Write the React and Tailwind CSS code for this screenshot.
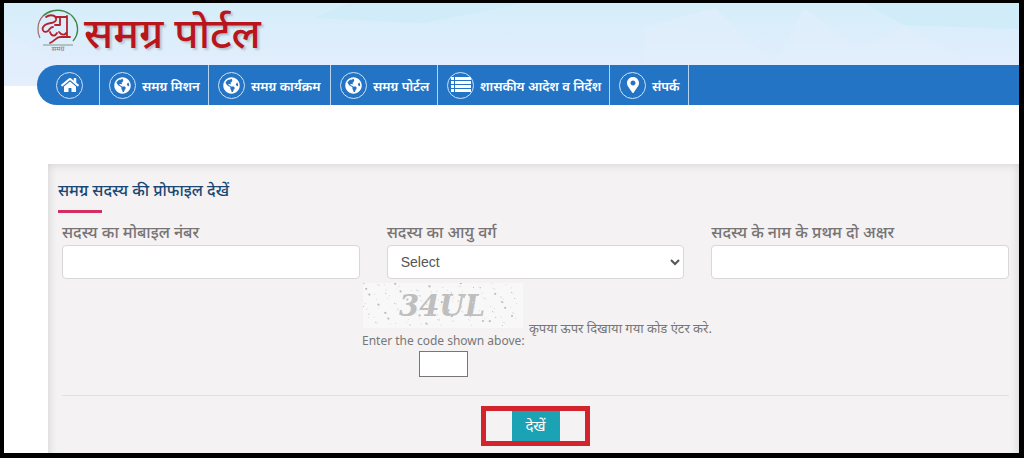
import React from "react";
import { FaHome, FaGlobeAmericas, FaMapMarkerAlt } from "react-icons/fa";

const navItems = [
  { label: "समग्र मिशन", icon: "globe", width: "w-[109px]" },
  { label: "समग्र कार्यक्रम", icon: "globe", width: "w-[122px]" },
  { label: "समग्र पोर्टल", icon: "globe", width: "w-[107px]" },
  { label: "शासकीय आदेश व निर्देश", icon: "list", width: "w-[172px]" },
  { label: "संपर्क", icon: "pin", width: "w-[79px]" },
];

function ListIcon() {
  return (
    <svg viewBox="0 0 22 18" className="h-[18px] w-[22px]" fill="currentColor" aria-hidden="true">
      {[1, 5, 9, 13].map((y) => (
        <g key={y}>
          <rect x="1" y={y} width="3" height="3" />
          <rect x="5" y={y} width="16" height="3" />
        </g>
      ))}
    </svg>
  );
}

const icons = {
  home: <FaHome className="size-[18px]" />,
  globe: <FaGlobeAmericas className="size-[17px]" />,
  list: <ListIcon />,
  pin: <FaMapMarkerAlt className="size-4" />,
};

function IconRing({ name }) {
  return (
    <span className="flex size-[27px] shrink-0 items-center justify-center rounded-full border border-[#cfe2f5] text-white">
      {icons[name]}
    </span>
  );
}

function Logo() {
  return (
    <svg viewBox="0 0 44 46" className="h-[46px] w-[44px] shrink-0" aria-hidden="true">
      <path d="M4 30A20 18.5 0 0 1 2 20A20 18.5 0 0 1 7 8" fill="none" stroke="#a2686a" strokeWidth="1.2" />
      <path d="M7 8A20 18.5 0 0 1 41.5 20A20 18.5 0 0 1 37 33" fill="none" stroke="#3f8746" strokeWidth="1.4" />
      <path d="M7 37H37" stroke="#7f9a84" strokeWidth="1" />
      <g fill="none" stroke="#b8202c" strokeWidth="1.8" strokeLinecap="round" strokeLinejoin="round">
        <path d="M10 9C14 6 21 7 20 12C19 16 13 14 9 17C4 21 8 26 12 23C14 21 14 19 17 19" />
        <path d="M14 24C15 28 19 29 21 25" />
        <path d="M20 9H26M24 9V17H19M31 8V29M27 9H31M31 24C29 28 25 27 23 24" />
        <path d="M14 35C19 33 20 29 24 29H34" />
      </g>
      <text x="22" y="43" textAnchor="middle" fontSize="7" fill="#9a6a80" fontFamily="Noto Sans Devanagari, Noto Sans, sans-serif">समग्र</text>
    </svg>
  );
}

function Backdrop() {
  return (
    <svg viewBox="0 0 1015 83" preserveAspectRatio="none" className="absolute inset-0 size-full" aria-hidden="true">
      <defs>
        <linearGradient id="sky" x1="0" y1="0" x2="0" y2="1">
          <stop offset="0" stopColor="#d5eefa" />
          <stop offset="1" stopColor="#e6edfd" />
        </linearGradient>
      </defs>
      <rect width="1015" height="83" fill="url(#sky)" />
      <path d="M0 30L60 62V83H0ZM711 5L770 62H640V24ZM800 5L855 45L900 22L960 58V62H770Z" fill="#e3effc" opacity=".6" />
      <path d="M310 15L345 0H520L420 20ZM860 0H1015V26L900 22Z" fill="#c9ebf6" opacity=".6" />
    </svg>
  );
}

function Field({ id, label, children }) {
  return (
    <div className="flex min-w-0 flex-col">
      <label htmlFor={id} className="h-6 pt-[2px] text-[16px] leading-6 font-medium whitespace-nowrap text-[#787474]">{label}</label>
      {children}
    </div>
  );
}

const specks = Array.from({ length: 150 }, (_, i) => ({
  x: (i * 61.7 + (i % 7) * 13) % 158,
  y: (i * 29.3 + (i % 5) * 7) % 43,
  r: i % 6 === 0 ? 1.1 : 0.6,
}));

function Captcha() {
  return (
    <svg viewBox="0 0 160 45" className="h-[45px] w-[160px]" role="img" aria-label="34UL">
      <rect width="160" height="45" fill="#f8f8f8" />
      <text x="36" y="33" fontFamily="DejaVu Serif, serif" fontStyle="italic" fontWeight="bold" fontSize="29" fill="#bebebe">34UL</text>
      {specks.map((s, i) => (
        <circle key={i} cx={s.x} cy={s.y} r={s.r} fill={i % 3 ? "#dcdcdc" : "#bdbdbd"} />
      ))}
    </svg>
  );
}

export default function App() {
  const box = "h-[34px] w-full rounded border border-[#d9d7d8] bg-white text-[14px] text-[#555]";
  return (
    <div className="h-screen overflow-hidden border-t-[3px] border-r-[5px] border-b-[5px] border-l-4 border-black bg-white font-['Noto_Sans_Devanagari','Noto_Sans',sans-serif]">
      <header className="relative h-[83px]">
        <Backdrop />
        <div className="relative flex h-[62px] items-start gap-1 pt-[5px] pl-8">
          <Logo />
          <h1 className="text-[42px] leading-[60px] font-medium whitespace-nowrap text-[#b8161c] [text-shadow:2px_2px_2px_#8886]">समग्र पोर्टल</h1>
        </div>
        <nav className="relative ml-[33px] flex h-10 rounded-l-[20px] bg-[#2474c6]">
          <a href="#home" aria-label="Home" className="flex w-[63px] items-center border-r border-[#b8d3ee] pl-[19px]">
            <IconRing name="home" />
          </a>
          {navItems.map((n) => (
            <a key={n.label} href="#menu" className={`flex items-center gap-[6px] border-r border-[#b8d3ee] pl-[9px] text-[13px] font-semibold whitespace-nowrap text-white ${n.width}`}>
              <IconRing name={n.icon} />
              <span className="pt-[6px]">{n.label}</span>
            </a>
          ))}
        </nav>
      </header>

      <main className="mt-[78px] ml-11 bg-[#f4f2f3] px-[10px] pt-4 pb-8 shadow-[inset_0_0_10px_#cfcdce]">
        <h2 className="h-[22px] pt-[2px] text-[16px] leading-[22px] font-medium whitespace-nowrap text-[#1b4873]">समग्र सदस्य की प्रोफाइल देखें</h2>
        <div className="mt-2 h-[3px] w-11 bg-[#d32f62]" />
        <form className="pt-2 pl-1" onSubmit={(e) => e.preventDefault()}>
          <div className="grid grid-cols-3 gap-[27px]">
            <Field id="mobile" label="सदस्य का मोबाइल नंबर">
              <input id="mobile" type="text" className={`${box} px-3`} />
            </Field>
            <Field id="age" label="सदस्य का आयु वर्ग">
              <select id="age" className={`${box} px-[9px] font-['Liberation_Sans',sans-serif]`}>
                <option>Select</option>
              </select>
            </Field>
            <Field id="name" label="सदस्य के नाम के प्रथम दो अक्षर">
              <input id="name" type="text" className={`${box} px-3`} />
            </Field>
          </div>
          <div className="ml-[300px] flex items-center gap-1 pt-1 text-[#777]">
            <div className="flex flex-col items-center">
              <Captcha />
              <label htmlFor="code" className="h-[23px] text-[12px] leading-7 whitespace-nowrap">Enter the code shown above:</label>
              <input id="code" type="text" className="h-[26px] w-[49px] border border-[#777] bg-white px-1" />
            </div>
            <p className="text-[13px] whitespace-nowrap">कृपया ऊपर दिखाया गया कोड एंटर करे.</p>
          </div>
          <hr className="mt-[18px] border-[#e2e0e1]" />
          <div className="mx-auto mt-[10px] flex h-10 w-[109px] items-stretch justify-center border-[5px] border-[#d3242d]">
            <button type="submit" className="w-12 bg-[#1ba2b5] pt-1 text-[15px] text-white">देखें</button>
          </div>
        </form>
      </main>
    </div>
  );
}
